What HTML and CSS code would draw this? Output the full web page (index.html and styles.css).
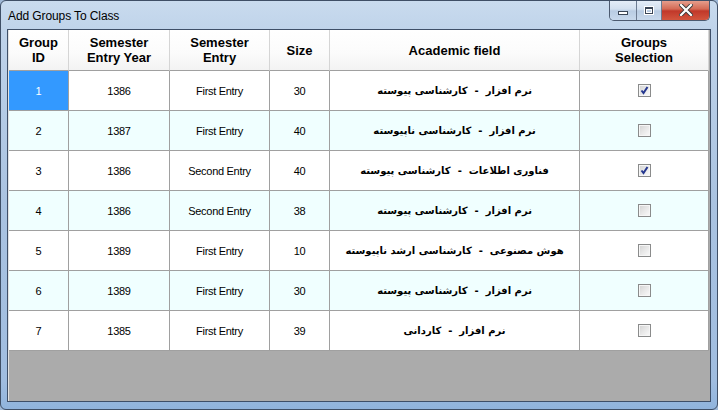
FILE: index.html
```html
<!DOCTYPE html>
<html>
<head>
<meta charset="utf-8">
<link rel="stylesheet" href="styles.css">
</head>
<body>
<div class="window">
  <div class="titlebar">
    <span class="title">Add Groups To Class</span>
    <div class="caption">
      <div class="cbtn min"><span class="min-ico"></span></div>
      <div class="cbtn max"><span class="max-ico"></span></div>
      <div class="cbtn close">
        <svg width="14" height="12" viewBox="0 0 14 12"><path d="M2 1 L12 11 M12 1 L2 11" stroke="#3a3a3a" stroke-width="4" stroke-linecap="square"/><path d="M2 1 L12 11 M12 1 L2 11" stroke="#ffffff" stroke-width="2.2" stroke-linecap="square"/></svg>
      </div>
    </div>
  </div>
  <div class="client">
    <div class="grid">
      <div class="hd">Group<br>ID</div>
      <div class="hd">Semester<br>Entry Year</div>
      <div class="hd">Semester<br>Entry</div>
      <div class="hd">Size</div>
      <div class="hd">Academic field</div>
      <div class="hd">Groups<br>Selection</div>

      <div class="c sel">1</div><div class="c">1386</div><div class="c">First Entry</div><div class="c">30</div><div class="c fa" dir="rtl">نرم افزار &nbsp;-&nbsp; کارشناسی پیوسته</div><div class="c"><span class="cb"><svg width="11" height="11" viewBox="0 0 11 11"><path d="M2.5 5.5 L4.5 8 L8.5 2" fill="none" stroke="#25378f" stroke-width="2"/></svg></span></div>

      <div class="c alt">2</div><div class="c alt">1387</div><div class="c alt">First Entry</div><div class="c alt">40</div><div class="c alt fa" dir="rtl">نرم افزار &nbsp;-&nbsp; کارشناسی ناپیوسته</div><div class="c alt"><span class="cb"></span></div>

      <div class="c">3</div><div class="c">1386</div><div class="c">Second Entry</div><div class="c">40</div><div class="c fa" dir="rtl">فناوری اطلاعات &nbsp;-&nbsp; کارشناسی پیوسته</div><div class="c"><span class="cb"><svg width="11" height="11" viewBox="0 0 11 11"><path d="M2.5 5.5 L4.5 8 L8.5 2" fill="none" stroke="#25378f" stroke-width="2"/></svg></span></div>

      <div class="c alt">4</div><div class="c alt">1386</div><div class="c alt">Second Entry</div><div class="c alt">38</div><div class="c alt fa" dir="rtl">نرم افزار &nbsp;-&nbsp; کارشناسی پیوسته</div><div class="c alt"><span class="cb"></span></div>

      <div class="c">5</div><div class="c">1389</div><div class="c">First Entry</div><div class="c">10</div><div class="c fa" dir="rtl">هوش مصنوعی &nbsp;-&nbsp; کارشناسی ارشد ناپیوسته</div><div class="c"><span class="cb"></span></div>

      <div class="c alt">6</div><div class="c alt">1389</div><div class="c alt">First Entry</div><div class="c alt">30</div><div class="c alt fa" dir="rtl">نرم افزار &nbsp;-&nbsp; کارشناسی پیوسته</div><div class="c alt"><span class="cb"></span></div>

      <div class="c">7</div><div class="c">1385</div><div class="c">First Entry</div><div class="c">39</div><div class="c fa" dir="rtl">نرم افزار &nbsp;-&nbsp; کاردانی</div><div class="c"><span class="cb"></span></div>
    </div>
  </div>
</div>
</body>
</html>
```
FILE: styles.css
```css
html, body {
  margin: 0;
  padding: 0;
  background: #9fb8d6;
}
.window {
  box-sizing: border-box;
  width: 718px;
  height: 410px;
  border: 1px solid #3f4f66;
  border-radius: 6px;
  padding: 0 6px 7px 6px;
  display: flex;
  flex-direction: column;
  background: linear-gradient(180deg, #c9dbee 0px, #bfd3ea 30px, #aac3e1 200px, #a0bde0 380px, #8fb3dc 410px);
  overflow: hidden;
}
.titlebar {
  height: 28px;
  display: flex;
  justify-content: space-between;
  align-items: flex-start;
  flex: none;
}
.title {
  font-family: "Liberation Sans", Arial, sans-serif;
  font-size: 12px;
  letter-spacing: -0.1px;
  color: #000;
  margin-top: 8px;
  margin-left: 1px;
}
.caption {
  display: flex;
  margin-top: -1px;
  margin-right: 1px;
  height: 20px;
  border: 1px solid #4c5a70;
  border-top: none;
  border-radius: 0 0 5px 5px;
  overflow: hidden;
}
.cbtn {
  box-sizing: border-box;
  height: 20px;
  display: flex;
  align-items: center;
  justify-content: center;
}
.min {
  width: 27px;
  border-right: 1px solid #6c7b91;
  background: linear-gradient(180deg, #e6eef8 0%, #d3e0ef 45%, #b9cce3 55%, #c8d9ec 100%);
}
.max {
  width: 25px;
  border-right: 1px solid #6c7b91;
  background: linear-gradient(180deg, #e6eef8 0%, #d3e0ef 45%, #b9cce3 55%, #c8d9ec 100%);
}
.close {
  width: 47px;
  background: linear-gradient(180deg, #e8a493 0%, #d46a55 45%, #c1382a 55%, #d2553e 100%);
}
.min-ico {
  display: block;
  width: 8px;
  height: 2px;
  margin-top: 6px;
  background: #fff;
  border: 1px solid #3b4656;
}
.max-ico {
  display: block;
  width: 6px;
  height: 4px;
  background: transparent;
  border: 1px solid #3b4656;
  box-shadow: inset 0 0 0 1px #fff, 0 0 0 1px #fff;
  border-top-width: 2px;
}
.client {
  height: 373px;
  box-sizing: border-box;
  border: 1px solid #3e4f68;
  background: #ababab;
  box-shadow: inset 1px 0 0 #e2e2e2;
  flex: none;
}
.grid {
  margin-left: 1px;
  width: 700px;
  display: grid;
  grid-template-columns: 60px 101px 100px 60px 250px 129px;
  grid-auto-rows: 40px;
  grid-template-rows: 41px;
}
.hd {
  box-sizing: border-box;
  font-family: "Liberation Sans", Arial, sans-serif;
  font-weight: bold;
  font-size: 13px;
  line-height: 15px;
  color: #000;
  text-align: center;
  display: flex;
  align-items: center;
  justify-content: center;
  background: linear-gradient(180deg, #ffffff 0%, #fbfbfb 60%, #f3f3f3 100%);
  border-right: 1px solid #d5d5d5;
  border-bottom: 1px solid #a0a0a0;
}
.hd:last-child {
  border-right: none;
}
.c {
  box-sizing: border-box;
  font-family: "Liberation Sans", Arial, sans-serif;
  font-size: 11px;
  letter-spacing: -0.3px;
  color: #000;
  display: flex;
  align-items: center;
  justify-content: center;
  background: #ffffff;
  border-right: 1px solid #a0a0a0;
  border-bottom: 1px solid #a0a0a0;
}
.c.alt {
  background: #f0ffff;
}
.c.sel {
  background: #3399ff;
  color: #ffffff;
}
.c.fa {
  font-family: "DejaVu Sans", sans-serif;
  font-weight: bold;
  font-size: 10px;
  letter-spacing: 0;
}
.cb {
  box-sizing: border-box;
  width: 13px;
  height: 13px;
  border: 1px solid #8a8b8b;
  background: linear-gradient(135deg, #d2d2d2 0%, #e8e8e8 50%, #fbfbfb 100%);
  box-shadow: inset 0 0 0 1px #f6f6f6;
  display: flex;
  align-items: center;
  justify-content: center;
  margin-left: 1px;
}
.cb svg {
  display: block;
}
```
